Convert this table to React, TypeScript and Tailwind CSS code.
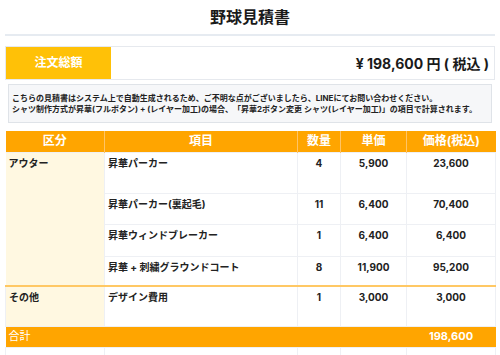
import React from 'react';

type Row = { name: string; qty: number; unit: string; price: string; h: string };

const outer: Row[] = [
  { name: '昇華パーカー', qty: 4, unit: '5,900', price: '23,600', h: 'h-[41px]' },
  { name: '昇華パーカー(裏起毛)', qty: 11, unit: '6,400', price: '70,400', h: 'h-[31px]' },
  { name: '昇華ウィンドブレーカー', qty: 1, unit: '6,400', price: '6,400', h: 'h-[32px]' },
  { name: '昇華 + 刺繍グラウンドコート', qty: 8, unit: '11,900', price: '95,200', h: 'h-[30px]' },
];

const cell = 'align-top border border-[#eef0f4] pt-[3px] text-[10px] font-bold leading-[14px] text-[#222]';
const sep = 'border-t-2 border-t-[#ffc864]';

export default function App() {
  return (
    <div
      className="w-[500px] h-[355px] overflow-hidden bg-white px-[5px] text-[#1a1a1a]"
      style={{ fontFamily: 'Inter, "Noto Sans CJK JP", sans-serif' }}
    >
      <h1 className="h-[36px] flex items-center justify-center text-[16px] font-bold border-b-2 border-[#e6ebf1]">
        野球見積書
      </h1>

      <div className="mt-[10px] flex h-[34px] border border-[#e6e9ee]">
        <div className="w-[105px] bg-[#ffc107] text-white flex items-center justify-center text-[12px] font-bold">
          注文総額
        </div>
        <div className="flex-1 flex items-center justify-end pr-[5px] text-[14px] font-bold">
          ¥ 198,600 円 ( 税込 )
        </div>
      </div>

      <div className="mt-[4px] mx-[3px] h-[39px] border border-[#dfe3e8] bg-[#f6f7f9] px-[3px] pt-[8px] text-[8px] font-bold leading-[11px] text-[#222] whitespace-nowrap">
        <p>こちらの見積書はシステム上で自動生成されるため、ご不明な点がございましたら、LINEにてお問い合わせください。</p>
        <p>シャツ制作方式が昇華(フルボタン) + (レイヤー加工)の場合、「昇華2ボタン変更 シャツ(レイヤー加工)」の項目で計算されます。</p>
      </div>

      <table className="mt-[8px] w-[490px] table-fixed border-collapse">
        <colgroup>
          <col className="w-[99px]" />
          <col className="w-[193px]" />
          <col className="w-[43px]" />
          <col className="w-[66px]" />
          <col className="w-[89px]" />
        </colgroup>
        <thead>
          <tr className="h-[21px] bg-[#ffa500] text-white text-[12px] font-bold">
            <th className="border-r border-[#ffc466]">区分</th>
            <th className="border-r border-[#ffc466]">項目</th>
            <th className="border-r border-[#ffc466]">数量</th>
            <th className="border-r border-[#ffc466]">単価</th>
            <th>価格(税込)</th>
          </tr>
        </thead>
        <tbody>
          {outer.map((r, i) => (
            <tr key={r.name} className={r.h}>
              {i === 0 && (
                <td rowSpan={4} className={`${cell} bg-[#fff8e1] pl-[3px] border-l-0`}>
                  アウター
                </td>
              )}
              <td className={`${cell} pl-[3px]`}>{r.name}</td>
              <td className={`${cell} text-center`}>{r.qty}</td>
              <td className={`${cell} text-center`}>{r.unit}</td>
              <td className={`${cell} text-center`}>{r.price}</td>
            </tr>
          ))}
          <tr className="h-[40px]">
            <td className={`${cell} ${sep} bg-[#fff8e1] pl-[3px]`}>その他</td>
            <td className={`${cell} ${sep} pl-[3px]`}>デザイン費用</td>
            <td className={`${cell} ${sep} text-center`}>1</td>
            <td className={`${cell} ${sep} text-center`}>3,000</td>
            <td className={`${cell} ${sep} text-center`}>3,000</td>
          </tr>
          <tr className="h-[21px] bg-[#ffa500] text-white text-[11px]">
            <td colSpan={4} className="pl-[3px]">合計</td>
            <td className="text-center font-bold">198,600</td>
          </tr>
          <tr className="h-[30px]">
            <td className="border border-[#eef0f4]" />
            <td className="border border-[#eef0f4]" />
            <td className="border border-[#eef0f4]" />
            <td className="border border-[#eef0f4]" />
            <td className="border border-[#eef0f4]" />
          </tr>
        </tbody>
      </table>
    </div>
  );
}
